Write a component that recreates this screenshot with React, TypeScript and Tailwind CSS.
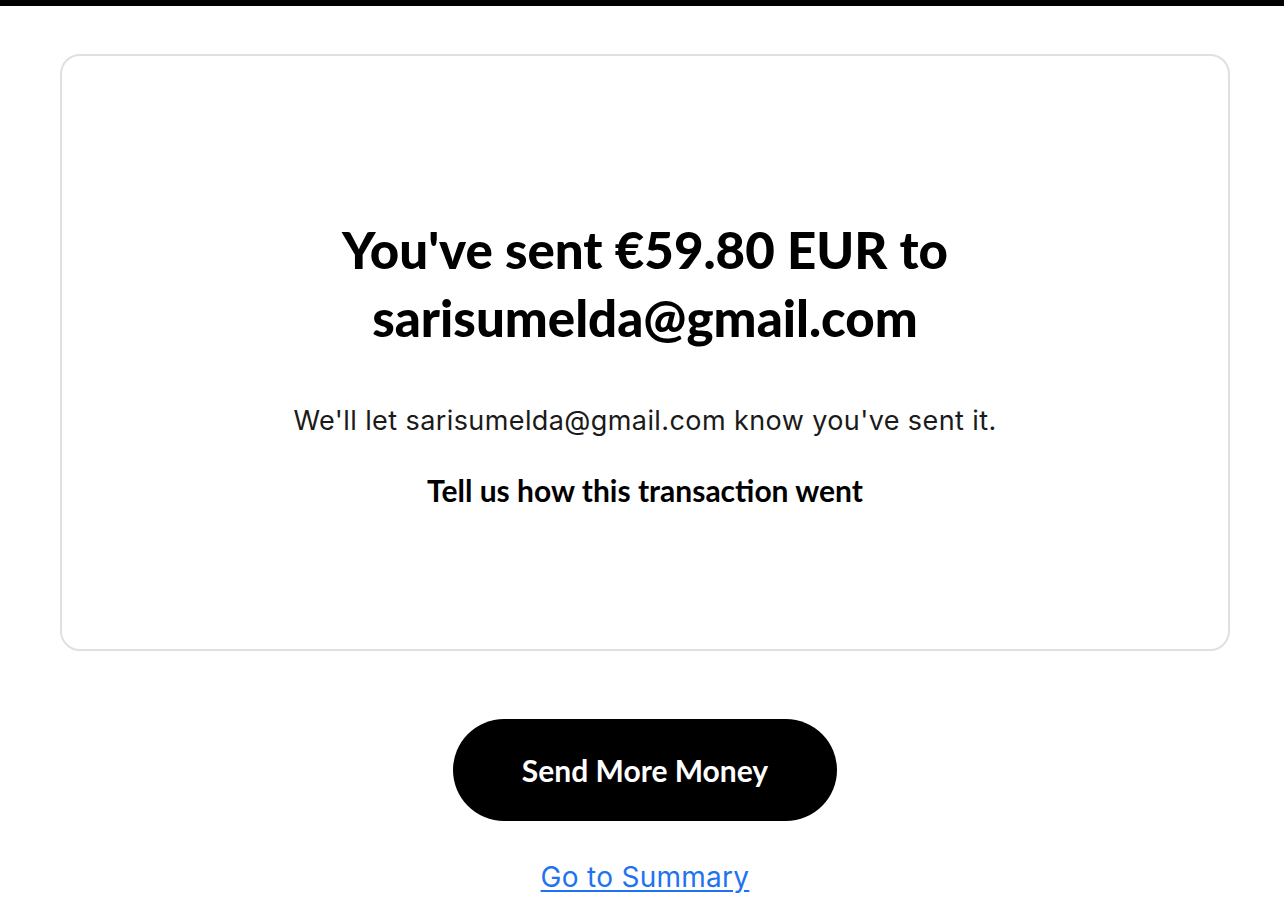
export default function App() {
  return (
    <div className="min-h-screen bg-white" style={{ fontFamily: "Lato, 'Liberation Sans', sans-serif" }}>
      {/* top bar */}
      <div className="h-[6px] bg-black" />

      <div className="pl-[60px] pr-[54px] pt-[48px] flex flex-col items-center">
        {/* confirmation card */}
        <div className="w-full h-[597px] border-2 border-[#e0e0e0] rounded-[20px] flex flex-col items-center pt-[160px]">
          <h1 className="text-center text-black font-black text-[51px] leading-[68px]">
            You've sent €59.80 EUR to
            <br />
            sarisumelda@gmail.com
          </h1>
          <p
            className="mt-[54px] text-[#1a1a1a] text-[27px] leading-[30px] tracking-[0.015em]"
            style={{ fontFamily: "Inter, 'Liberation Sans', sans-serif" }}
          >
            We'll let sarisumelda@gmail.com know you've sent it.
          </p>
          <p className="mt-[39px] text-black font-bold text-[30px] leading-[30px]">
            Tell us how this transaction went
          </p>
        </div>

        {/* actions */}
        <button className="mt-[68px] w-[384px] h-[102px] rounded-full bg-black text-white font-bold text-[30px]">
          Send More Money
        </button>
        <a
          href="#"
          className="mt-[41px] text-[#1f72f0] text-[28px] leading-[30px] tracking-[0.01em] underline underline-offset-[3px]"
          style={{ fontFamily: "Inter, 'Liberation Sans', sans-serif" }}
        >
          Go to Summary
        </a>
      </div>
    </div>
  );
}
